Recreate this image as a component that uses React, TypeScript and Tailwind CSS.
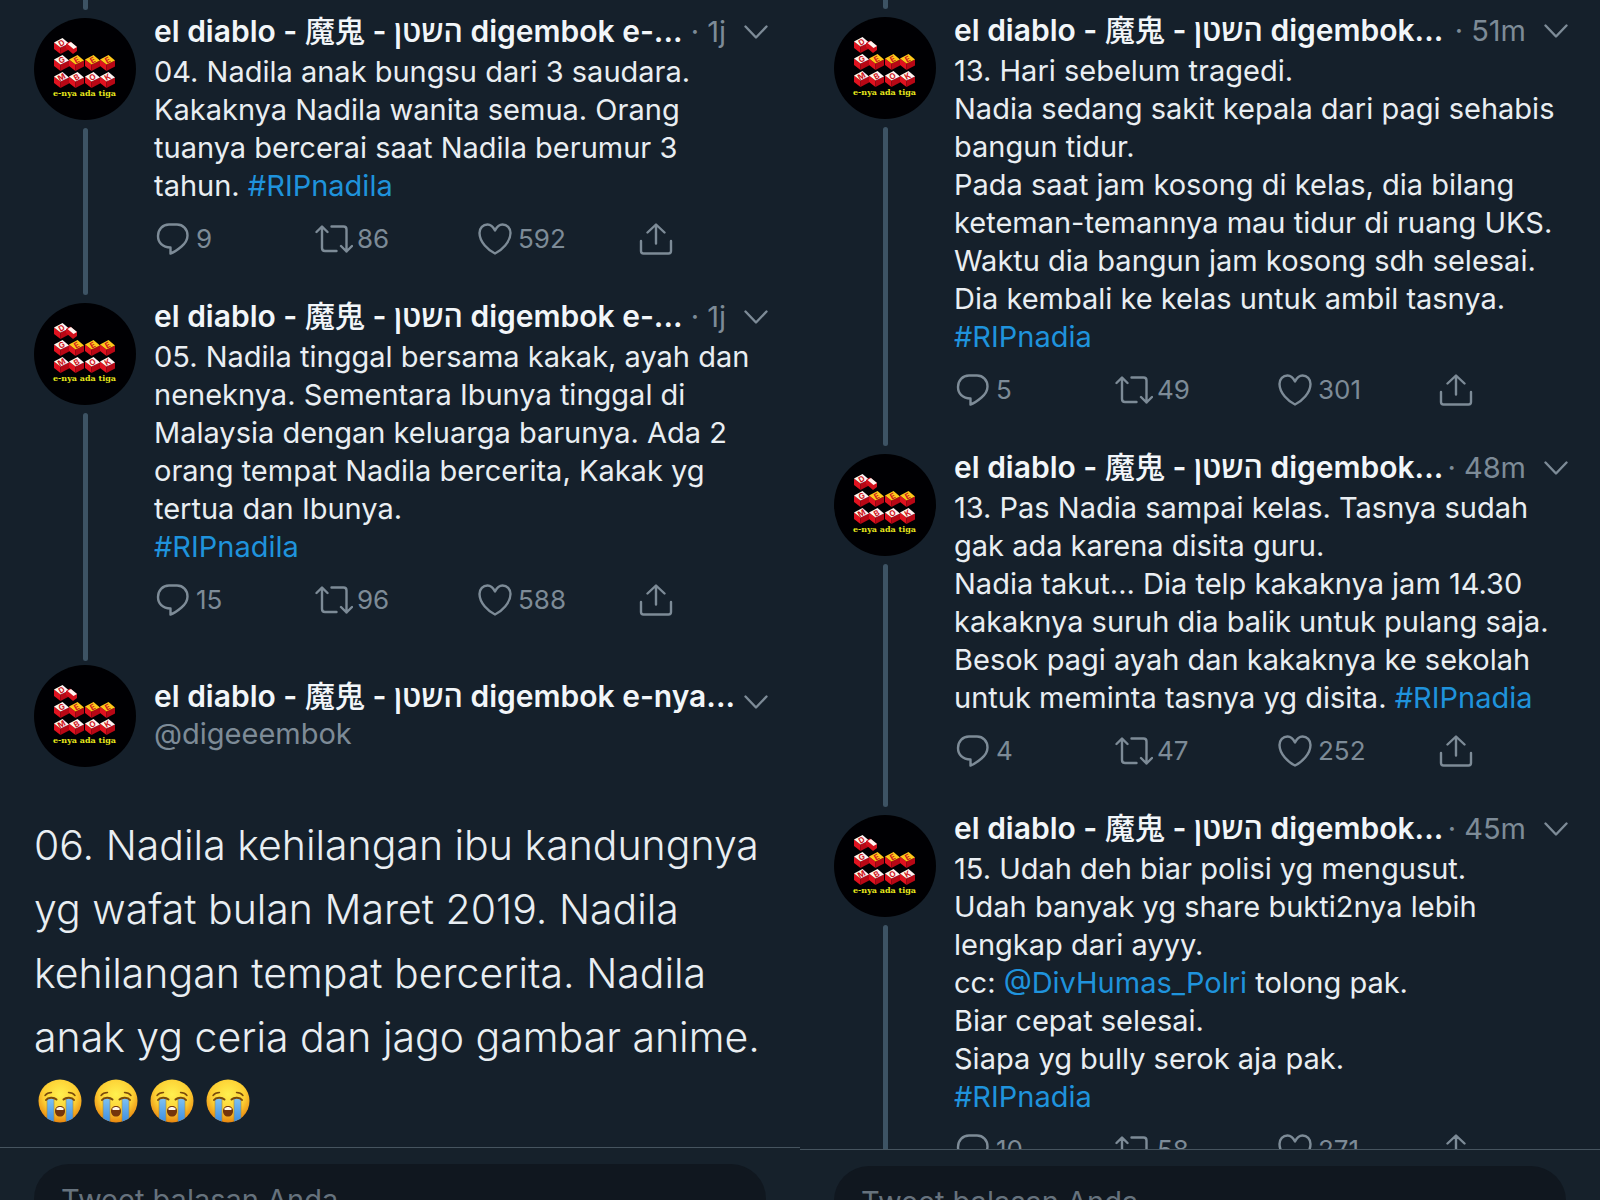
import React from "react";

type Tweet = {
  name: string;
  time: string;
  lines: string[];
  replies: number;
  retweets: number;
  likes: number;
};

const leftTweets: Tweet[] = [
  {
    name: " e-...",
    time: "1j",
    lines: [
      "04. Nadila anak bungsu dari 3 saudara.",
      "Kakaknya Nadila wanita semua. Orang",
      "tuanya bercerai saat Nadila berumur 3",
      "tahun. #RIPnadila",
    ],
    replies: 9,
    retweets: 86,
    likes: 592,
  },
  {
    name: " e-...",
    time: "1j",
    lines: [
      "05. Nadila tinggal bersama kakak, ayah dan",
      "neneknya. Sementara Ibunya tinggal di",
      "Malaysia dengan keluarga barunya. Ada 2",
      "orang tempat Nadila bercerita, Kakak yg",
      "tertua dan Ibunya.",
      "#RIPnadila",
    ],
    replies: 15,
    retweets: 96,
    likes: 588,
  },
];

const rightTweets: Tweet[] = [
  {
    name: "...",
    time: "51m",
    lines: [
      "13. Hari sebelum tragedi.",
      "Nadia sedang sakit kepala dari pagi sehabis",
      "bangun tidur.",
      "Pada saat jam kosong di kelas, dia bilang",
      "keteman-temannya mau tidur di ruang UKS.",
      "Waktu dia bangun jam kosong sdh selesai.",
      "Dia kembali ke kelas untuk ambil tasnya.",
      "#RIPnadia",
    ],
    replies: 5,
    retweets: 49,
    likes: 301,
  },
  {
    name: "...",
    time: "48m",
    lines: [
      "13. Pas Nadia sampai kelas. Tasnya sudah",
      "gak ada karena disita guru.",
      "Nadia takut... Dia telp kakaknya jam 14.30",
      "kakaknya suruh dia balik untuk pulang saja.",
      "Besok pagi ayah dan kakaknya ke sekolah",
      "untuk meminta tasnya yg disita. #RIPnadia",
    ],
    replies: 4,
    retweets: 47,
    likes: 252,
  },
  {
    name: "...",
    time: "45m",
    lines: [
      "15. Udah deh biar polisi yg mengusut.",
      "Udah banyak yg share bukti2nya lebih",
      "lengkap dari ayyy.",
      "cc: @DivHumas_Polri tolong pak.",
      "Biar cepat selesai.",
      "Siapa yg bully serok aja pak.",
      "#RIPnadia",
    ],
    replies: 10,
    retweets: 58,
    likes: 271,
  },
];

function Cube({ x, y, letter, face = "#fff4f0" }: { x: number; y: number; letter: string; face?: string }) {
  return (
    <g transform={`translate(${x} ${y})`}>
      <path d="M0 4.5 L6.5 9.5 V16 L0 11 Z" fill="#e0121f" />
      <path d="M6.5 9.5 L15 5.5 V11.5 L6.5 16 Z" fill="#b80715" />
      <path d="M0 4.5 L8.5 0 L15 5.5 L6.5 9.5 Z" fill={face} />
      <text
        x="7.5"
        y="8"
        textAnchor="middle"
        transform="rotate(-30 7.5 5)"
        fontSize="8"
        fontWeight="700"
        fill="#cf1420"
        className="font-['Inter',sans-serif]"
      >
        {letter}
      </text>
    </g>
  );
}

function Avatar() {
  return (
    <svg viewBox="0 0 102 102" className="size-[102px] shrink-0" aria-hidden="true">
      <circle cx="51" cy="51" r="51" fill="#000003" />
      <Cube x={20} y={20} letter="D" />
      <path d="M32 26 L36 23.5 L43 29 V33 L39 36 L32 30 Z" fill="#d30f1b" />
      <path d="M33.5 26 L37 24 L43 29 L39.5 31 Z" fill="#fff4f0" />
      <Cube x={20} y={37} letter="G" />
      <Cube x={35} y={37} letter="E" face="#ffc91a" />
      <Cube x={51} y={37} letter="E" face="#ffc91a" />
      <Cube x={66} y={37} letter="E" face="#ffc91a" />
      <Cube x={20} y={54} letter="M" />
      <Cube x={35} y={54} letter="B" />
      <Cube x={51} y={54} letter="O" />
      <Cube x={66} y={54} letter="K" />
      <text
        x="50.5"
        y="78"
        textAnchor="middle"
        fontSize="8"
        fontWeight="700"
        fill="#e6e61c"
        className="font-['DejaVu_Serif',serif]"
      >
        e-nya ada tiga
      </text>
    </svg>
  );
}

function Icon({ children }: { children: React.ReactNode }) {
  return (
    <svg
      viewBox="0 0 38 32"
      className="h-8 w-[38px] shrink-0"
      fill="none"
      stroke="currentColor"
      strokeWidth="2.4"
      strokeLinecap="round"
      strokeLinejoin="round"
      aria-hidden="true"
    >
      {children}
    </svg>
  );
}

function Chevron() {
  return (
    <button aria-label="Menu" className="shrink-0 text-[#7d8b97]">
      <svg viewBox="0 0 24 16" className="h-4 w-6" fill="none" stroke="currentColor" strokeWidth="2.4" strokeLinecap="round" strokeLinejoin="round">
        <path d="M1.5 2.5 L12 13.5 L22.5 2.5" />
      </svg>
    </button>
  );
}

function CryingFace() {
  return (
    <svg viewBox="0 0 44 44" className="size-11" role="img" aria-label="😭">
      <defs>
        <radialGradient id="face" cx="0.5" cy="0.35" r="0.65">
          <stop offset="0" stopColor="#fff04f" />
          <stop offset="0.6" stopColor="#fdcf33" />
          <stop offset="1" stopColor="#e8860f" />
        </radialGradient>
        <linearGradient id="tear" x1="0" y1="0" x2="0" y2="1">
          <stop offset="0" stopColor="#7cc0f2" />
          <stop offset="1" stopColor="#3a8be0" />
        </linearGradient>
        <clipPath id="head">
          <circle cx="22" cy="22" r="21.5" />
        </clipPath>
      </defs>
      <circle cx="22" cy="22" r="21.5" fill="url(#face)" />
      <g clipPath="url(#head)">
        <path d="M9 20 H16 V44 H9 Z M28 20 H35 V44 H28 Z" fill="url(#tear)" />
        <path d="M9 20 V44 M16 20 V44 M28 20 V44 M35 20 V44" stroke="#a98a3c" strokeWidth="0.6" />
      </g>
      <g fill="none" stroke="#7a4a0c" strokeLinecap="round">
        <path d="M8 21 C10 18 16 18 18.5 20.5" strokeWidth="2" />
        <path d="M36 21 C34 18 28 18 25.5 20.5" strokeWidth="2" />
        <path d="M7 16.5 C8.5 14.5 10.5 13.5 13.5 13.5" strokeWidth="1.4" />
        <path d="M37 16.5 C35.5 14.5 33.5 13.5 30.5 13.5" strokeWidth="1.4" />
      </g>
      <path d="M22 27 C25 27 27 29 27 32 C27 35.5 25 37.5 22 37.5 C19 37.5 17 35.5 17 32 C17 29 19 27 22 27 Z" fill="#74350c" />
      <path d="M18.5 29.5 C20 27.5 24 27.5 25.5 29.5 V31 H18.5 Z" fill="#fff6e6" />
    </svg>
  );
}

function Line({ text }: { text: string }) {
  return (
    <span className="block whitespace-nowrap">
      {text.split(/([#@]\w+)/).map((part, i) =>
        /^[#@]/.test(part) ? (
          <a key={i} href={part} className="text-[#1f93dc]">
            {part}
          </a>
        ) : (
          part
        )
      )}
    </span>
  );
}

function Name({ ending }: { ending: string }) {
  return (
    <h2 className="min-w-0 flex-1 text-[30px] font-semibold whitespace-nowrap text-[#f2f6f9]">
      el diablo - <span className="font-medium">魔鬼</span> - השטן digembok{ending}
    </h2>
  );
}

function TweetRow({ tweet }: { tweet: Tweet }) {
  return (
    <article className="flex gap-[18px]">
      <div className="flex flex-col items-center pt-2">
        <Avatar />
        <span className="mt-2 w-[5px] flex-1 rounded-full bg-[#3d5364]" />
      </div>
      <div className="min-w-0 flex-1 pb-[37px]">
        <header className="flex h-[43px] items-center">
          <Name ending={tweet.name} />
          <span className="mr-[18px] whitespace-nowrap text-[#7d8b97]">· {tweet.time}</span>
          <Chevron />
        </header>
        <p className="leading-[38px]">
          {tweet.lines.map((line) => (
            <Line key={line} text={line} />
          ))}
        </p>
        {/* Actions */}
        <div className="mt-[15px] -mr-[30px] grid grid-cols-4 text-[26px] leading-[38px] text-[#7d8b97]">
          <button className="flex items-center gap-1" aria-label="Balas">
            <Icon>
              <path d="M15 1.5 H23 C29 1.5 33.5 6 33.5 12.5 C33.5 17 31 20.5 27.5 23.5 C24.5 26 21 29 16.5 30.5 V24.5 C8.5 24.5 4 19.5 4 13 C4 6.5 8.5 1.5 15 1.5 Z" />
            </Icon>
            {tweet.replies}
          </button>
          <button className="flex items-center gap-1" aria-label="Retweet">
            <Icon>
              <path d="M1.5 9 L7 3.5 L12.5 9 M7 4 V25 Q7 28 10 28 H21.5" />
              <path d="M16.5 3.5 H28.5 Q31.5 3.5 31.5 6.5 V28.5 M26 23 L31.5 28.5 L37 23" />
            </Icon>
            {tweet.retweets}
          </button>
          <button className="flex items-center gap-1" aria-label="Suka">
            <Icon>
              <path d="M19 7.5 C17 3.5 14.5 1.5 11.5 1.5 C7 1.5 3.5 5 3.5 10 C3.5 19 12.5 27.5 19 30.5 C25.5 27.5 34.5 19 34.5 10 C34.5 5 31 1.5 26.5 1.5 C23.5 1.5 21 3.5 19 7.5 Z" />
            </Icon>
            {tweet.likes}
          </button>
          <button className="flex items-center gap-1" aria-label="Bagikan">
            <Icon>
              <path d="M10.5 9.5 L19 1.5 L27.5 9.5 M19 2 V20.5 M4 18 V28 Q4 30.5 6.5 30.5 H31.5 Q34 30.5 34 28 V18" />
            </Icon>
          </button>
        </div>
      </div>
    </article>
  );
}

function ReplyBar({ id, className }: { id: string; className: string }) {
  return (
    <footer className={`shrink-0 overflow-hidden border-t border-[#46545f] bg-[#16212b] px-[34px] pt-4 ${className}`}>
      <label htmlFor={id} className="sr-only">
        Tweet balasan Anda
      </label>
      <input
        id={id}
        type="text"
        placeholder="Tweet balasan Anda"
        className="h-[70px] w-full rounded-full bg-[#10171f] px-[27px] placeholder:text-[#66727d] focus:outline-none"
      />
    </footer>
  );
}

export default function App() {
  return (
    <main className="grid h-screen grid-cols-2 overflow-hidden bg-[#15202b] font-['Inter','Open_Sans','Noto_Sans_CJK_JP',sans-serif] text-[29px] text-[#e9eef2]">
      <section className="flex min-h-0 min-w-0 flex-col">
        <div className="min-h-0 flex-1 overflow-hidden pr-8 pl-[34px]">
          <div className="flex h-[10px] w-[102px] justify-center">
            <span className="w-[5px] rounded-b-full bg-[#3d5364]" />
          </div>
          {leftTweets.map((tweet, i) => (
            <TweetRow key={i} tweet={tweet} />
          ))}
          {/* Focused tweet */}
          <article>
            <header className="flex gap-[18px]">
              <div className="flex flex-col items-center">
                <span className="-mt-1 mb-1 h-[9px] w-[5px] rounded-b-full bg-[#3d5364]" />
                <Avatar />
              </div>
              <div className="flex min-w-0 flex-1 items-center">
                <div className="min-w-0 flex-1">
                  <Name ending=" e-nya..." />
                  <p className="leading-[30px] text-[#7d8b97]">@digeeembok</p>
                </div>
                <div className="pb-6">
                  <Chevron />
                </div>
              </div>
            </header>
            <p className="mt-[46px] text-[41px] leading-[64px] font-light">
              <Line text="06. Nadila kehilangan ibu kandungnya" />
              <Line text="yg wafat bulan Maret 2019. Nadila" />
              <Line text="kehilangan tempat bercerita. Nadila" />
              <Line text="anak yg ceria dan jago gambar anime." />
            </p>
            <div className="mt-[10px] flex gap-3 pl-1">
              <CryingFace />
              <CryingFace />
              <CryingFace />
              <CryingFace />
            </div>
          </article>
        </div>
        <ReplyBar id="reply-left" className="h-[53px]" />
      </section>

      <section className="flex min-h-0 min-w-0 flex-col">
        <div className="min-h-0 flex-1 overflow-hidden pr-8 pl-[34px]">
          <div className="flex h-[9px] w-[102px] justify-center">
            <span className="w-[5px] rounded-b-full bg-[#3d5364]" />
          </div>
          {rightTweets.map((tweet, i) => (
            <TweetRow key={i} tweet={tweet} />
          ))}
        </div>
        <ReplyBar id="reply-right" className="h-[51px]" />
      </section>
    </main>
  );
}
